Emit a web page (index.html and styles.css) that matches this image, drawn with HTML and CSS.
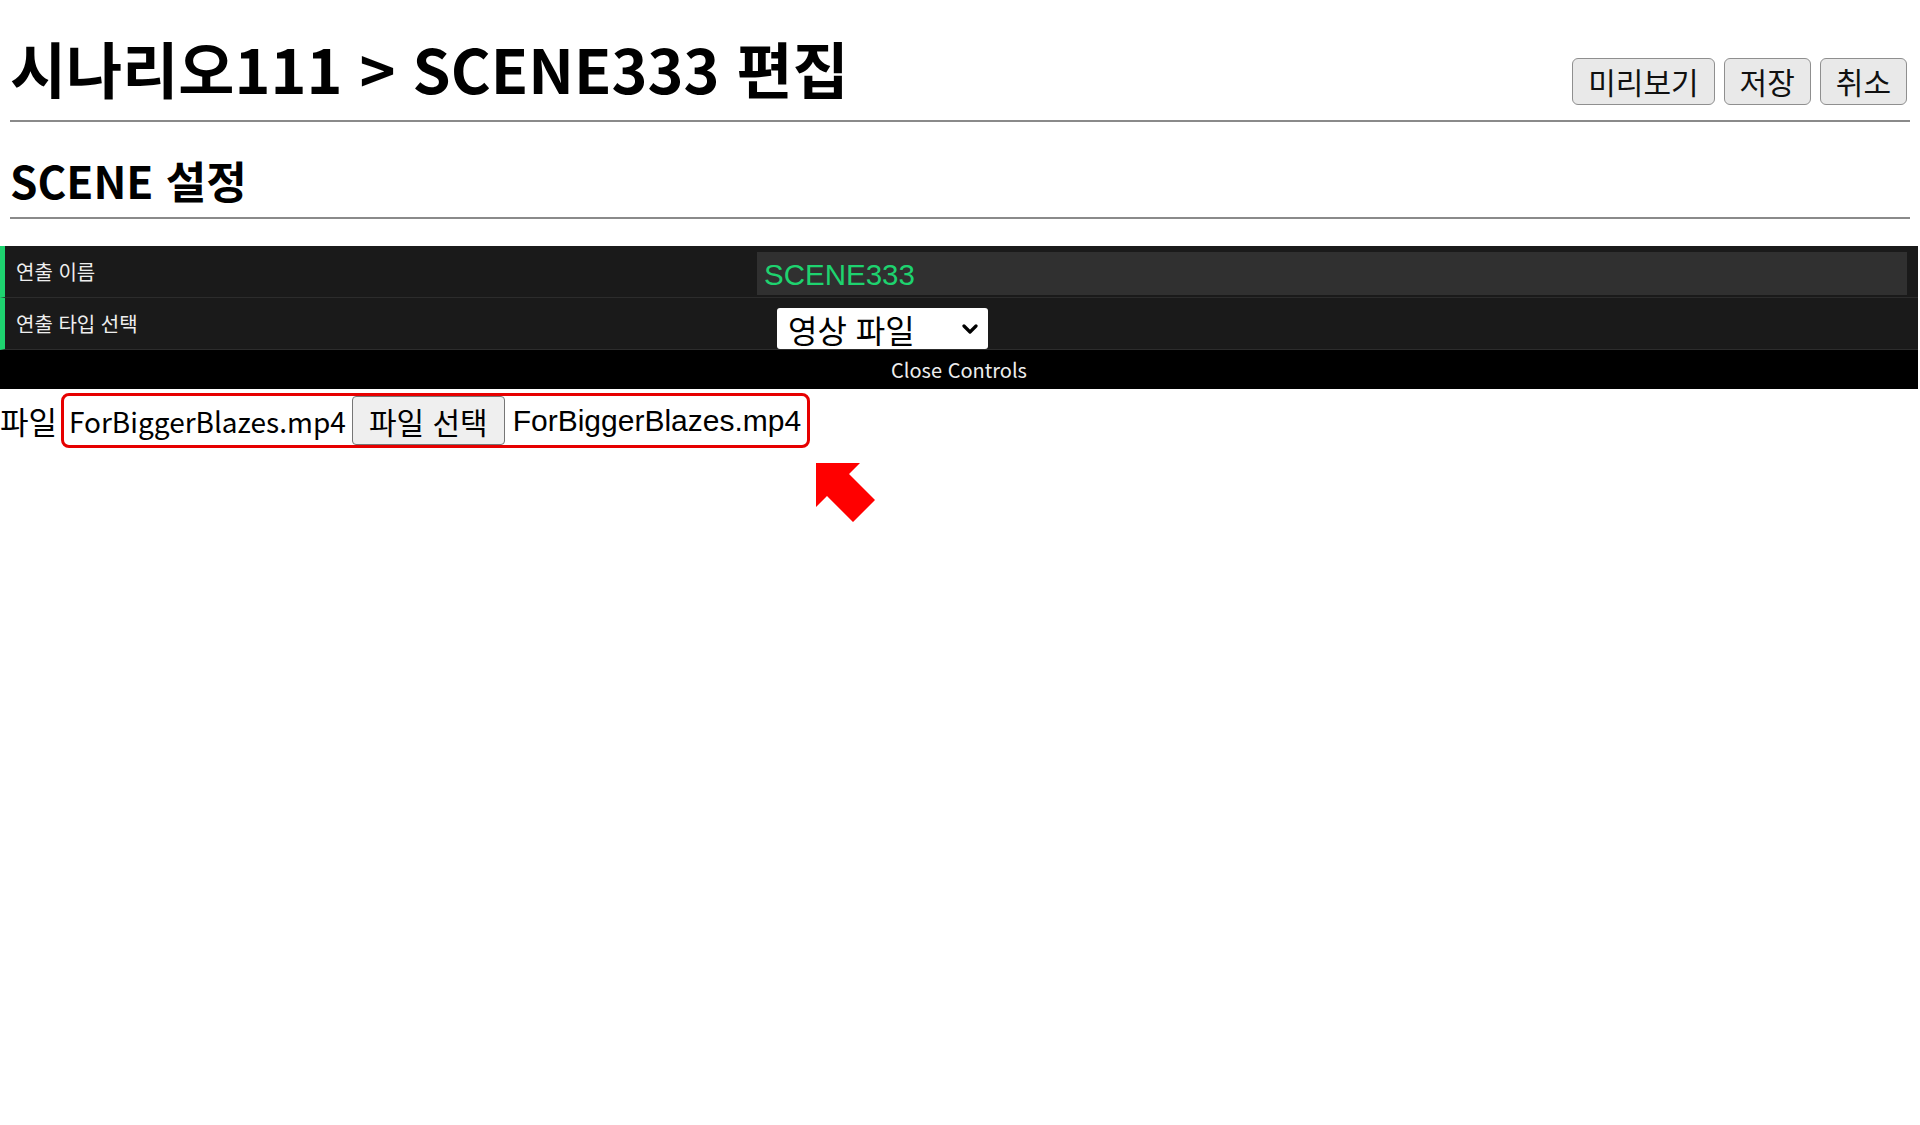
FILE: index.html
```html
<!DOCTYPE html>
<html lang="ko">
<head>
<meta charset="utf-8">
<title>SCENE 편집</title>
<link rel="stylesheet" href="styles.css">
</head>
<body>
<header class="page-head">
  <h1 class="title">시나리오111 &gt; SCENE333 편집</h1>
  <div class="actions">
    <button class="btn">미리보기</button>
    <button class="btn">저장</button>
    <button class="btn">취소</button>
  </div>
</header>
<h2 class="section">SCENE 설정</h2>
<div class="gui">
  <div class="row">
    <span class="name">연출 이름</span>
    <div class="ctrl"><div class="text-input">SCENE333</div></div>
  </div>
  <div class="row">
    <span class="name">연출 타입 선택</span>
    <div class="ctrl">
      <div class="select"><span>영상 파일</span>
        <svg class="chev" viewBox="0 0 16 10" width="16" height="10"><path d="M2 2 L8 8 L14 2" fill="none" stroke="#000" stroke-width="3.2" stroke-linecap="round" stroke-linejoin="round"/></svg>
      </div>
    </div>
  </div>
  <div class="close">Close Controls</div>
</div>
<div class="file-row">
  <span class="file-label">파일</span>
  <div class="file-box">
    <span class="file-name">ForBiggerBlazes.mp4</span>
    <span class="file-btn">파일 선택</span>
    <span class="file-chosen">ForBiggerBlazes.mp4</span>
  </div>
</div>
<svg class="arrow" viewBox="0 0 70 70" width="70" height="70"><polygon points="6,5 50,5 39,16 65,42 43,64 17,38 6,49" fill="#ff0000"/></svg>
</body>
</html>
```

FILE: styles.css
```css
* { box-sizing: border-box; }
html, body { margin: 0; padding: 0; background: #fff; }
body {
  font-family: "Noto Sans CJK KR", "Noto Sans", sans-serif;
  color: #000;
  position: relative;
  min-height: 1125px;
}
.page-head {
  display: flex;
  justify-content: space-between;
  align-items: flex-end;
  margin: 0 10px;
  padding: 37px 0 15px;
  border-bottom: 2px solid #8a8a8a;
}
.title {
  margin: 0 0 7px;
  font-size: 61px;
  font-weight: 700;
  line-height: 1;
}
.actions {
  display: flex;
  gap: 9px;
  margin-right: 3px;
}
.btn {
  font-family: inherit;
  font-size: 30px;
  line-height: 35px;
  padding: 5px 15px;
  background: #e9e9e9;
  border: 1px solid #8f8f8f;
  border-radius: 6px;
  color: #111;
}
.section {
  margin: 36px 10px 0;
  padding-bottom: 15px;
  border-bottom: 2px solid #8a8a8a;
  font-size: 44px;
  font-weight: 700;
  line-height: 1;
}
.gui {
  margin: 27px 2px 0 0;
  background: #1a1a1a;
}
.row {
  display: flex;
  height: 52px;
  border-left: 5px solid #1ed36f;
  border-bottom: 1px solid #2c2c2c;
  background: #1a1a1a;
}
.name {
  width: 752px;
  padding-left: 11px;
  align-self: center;
  font-size: 20px;
  color: #eee;
  line-height: 1;
}
.ctrl {
  flex: 1;
  padding-right: 11px;
}
.text-input {
  margin-top: 6px;
  height: 43px;
  background: #303030;
  color: #1ed36f;
  font-family: "Liberation Sans", Arial, sans-serif;
  font-size: 29.5px;
  line-height: 45px;
  padding-left: 7px;
}
.select {
  margin: 10px 0 0 20px;
  width: 211px;
  height: 41px;
  background: #fff;
  border-radius: 3px;
  display: flex;
  align-items: center;
  justify-content: space-between;
  padding: 0 10px 0 11px;
  font-size: 32px;
  line-height: 1;
  color: #000;
}
.chev { display: block; }
.close {
  height: 39px;
  background: #000;
  color: #eee;
  text-align: center;
  font-size: 20px;
  line-height: 39px;
}
.file-row {
  display: flex;
  align-items: center;
  margin-top: 4px;
  height: 55px;
  font-size: 31px;
  line-height: 1;
}
.file-label { width: 61px; }
.file-box {
  display: flex;
  align-items: center;
  height: 55px;
  border: 3px solid #e60000;
  border-radius: 8px;
  padding: 0 6px 0 5px;
}
.file-name { margin-right: 6px; font-size: 28px; }
.file-btn {
  height: 49px;
  padding: 0 16px;
  display: flex;
  align-items: center;
  border: 1px solid #767676;
  border-radius: 4px;
  background: #efefef;
  font-size: 30px;
}
.file-chosen {
  margin-left: 8px;
  font-family: "Liberation Sans", Arial, sans-serif;
  font-size: 30px;
}
.arrow {
  position: absolute;
  left: 810px;
  top: 458px;
}
```
